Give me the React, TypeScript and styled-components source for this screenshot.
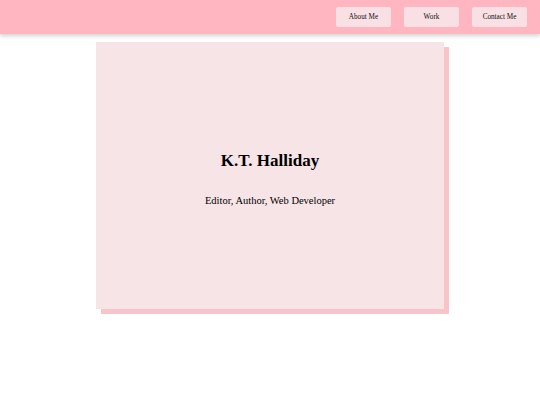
import React from "react";
import styled, { createGlobalStyle } from "styled-components";

const Global = createGlobalStyle`
  html, body { margin: 0; padding: 0; background: #ffffff; }
  body { font-family: "Liberation Serif", "Times New Roman", serif; color: #000; }
`;

const Header = styled.header`
  height: 34px;
  background: #ffb6c1;
  box-shadow: 0 2px 4px rgba(0, 0, 0, 0.18);
  display: flex;
  align-items: center;
  justify-content: flex-end;
  gap: 13px;
  padding-right: 13px;
  box-sizing: border-box;
`;

const NavButton = styled.button`
  width: 55px;
  height: 20px;
  border: none;
  border-radius: 2px;
  background: #f9e0e4;
  font-family: "Liberation Serif", "Times New Roman", serif;
  font-size: 7.2px;
  color: #111;
  padding: 0;
  cursor: pointer;
`;

const Main = styled.main`
  display: flex;
  justify-content: center;
  padding-top: 8px;
  padding-bottom: 10px;
`;

const Card = styled.section`
  width: 348px;
  height: 267px;
  background: #f7e4e6;
  box-shadow: 5px 5px 0 #f9c4c9;
  display: flex;
  flex-direction: column;
  align-items: center;
  justify-content: center;
`;

const Title = styled.h1`
  margin: 0;
  font-size: 17px;
  font-weight: bold;
  margin-top: 5px;
`;

const Subtitle = styled.p`
  margin: 24px 0 0;
  font-size: 10.5px;
`;

export default function App() {
  return (
    <>
      <Global />
      <Header>
        <NavButton>About Me</NavButton>
        <NavButton>Work</NavButton>
        <NavButton>Contact Me</NavButton>
      </Header>
      <Main>
        <Card>
          <Title>K.T. Halliday</Title>
          <Subtitle>Editor, Author, Web Developer</Subtitle>
        </Card>
      </Main>
    </>
  );
}
